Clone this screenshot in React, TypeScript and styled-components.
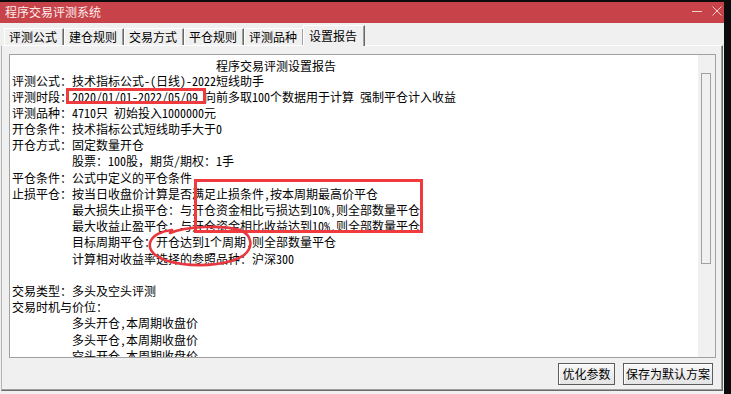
import React from 'react'
import styled, { createGlobalStyle } from 'styled-components'

const GlobalStyle = createGlobalStyle`
  html, body {
    margin: 0;
    padding: 0;
    background: #0c0c0c;
  }
  body {
    font-family: "Noto Sans Mono CJK SC", "Noto Sans CJK SC", sans-serif;
    font-size: 12px;
    color: #000;
  }
`

const Screen = styled.div`
  width: 731px;
  height: 394px;
  padding-top: 2px;
  box-sizing: border-box;
  overflow: hidden;
  background: #0c0c0c;
`

const Window = styled.div`
  width: 724px;
  height: 392px;
  display: flex;
  flex-direction: column;
  background: #f0f0f0;
`

const TitleBar = styled.div`
  height: 21px;
  flex: none;
  display: flex;
  align-items: center;
  padding: 0 2px 0 5px;
  background: #c84349;
  color: #fbecec;
`

const TitleText = styled.span`
  flex: 1;
  line-height: 21px;
  margin-top: -2px;
`

const WinControls = styled.div`
  display: flex;
  align-items: center;
  gap: 10px;
  margin-top: -3px;
`

const TabStrip = styled.div`
  height: 22px;
  flex: none;
  display: flex;
  align-items: flex-end;
  padding-left: 4px;
`

const Tab = styled.div<{ $active?: boolean }>`
  box-sizing: border-box;
  width: ${(p) => (p.$active ? '62px' : '60px')};
  height: ${(p) => (p.$active ? '21px' : '17px')};
  margin-left: ${(p) => (p.$active ? '-1px' : '0')};
  margin-bottom: ${(p) => (p.$active ? '-1px' : '0')};
  display: flex;
  align-items: center;
  justify-content: center;
  padding-right: 2px;
  border-top: 1px solid #ffffff;
  border-left: 1px solid #ffffff;
  border-right: 1px solid #696969;
  box-shadow: inset -1px 0 0 #a0a0a0;
  background: #f0f0f0;
  position: relative;
  z-index: ${(p) => (p.$active ? 1 : 0)};
  line-height: 16px;
`

const Panel = styled.div`
  flex: 1;
  margin: 0 1px 3px 1px;
  padding: 8px 0 0 7px;
  border-top: 1px solid #ffffff;
  border-left: 1px solid #b4b4b4;
  border-right: 1px solid #696969;
  border-bottom: 1px solid #696969;
  box-shadow: inset -1px -1px 0 #a0a0a0;
  display: flex;
  flex-direction: column;
`

const TextBox = styled.div`
  box-sizing: border-box;
  width: 707px;
  height: 304px;
  flex: none;
  display: flex;
  border: 1px solid #a0a0a0;
  background: #ffffff;
`

const Content = styled.div`
  flex: 1;
  position: relative;
  overflow: hidden;
  padding: 2.5px 0 0 2px;
`

const Heading = styled.div`
  height: 15px;
  line-height: 15px;
  padding-left: 204px;
  white-space: pre;
`

const Line = styled.div`
  display: flex;
  height: 16.2px;
  line-height: 16.2px;
  white-space: pre;
`

const Label = styled.span<{ $wide?: boolean }>`
  flex: none;
  width: ${(p) => (p.$wide ? 'auto' : '60px')};
`

const ScrollTrack = styled.div`
  width: 17px;
  flex: none;
  background: #f0f0f0;
  padding: 18px 0 0 3px;
  box-sizing: border-box;
`

const ScrollThumb = styled.div`
  width: 10px;
  height: 191px;
  box-sizing: border-box;
  border: 1px solid #a0a0a0;
  background: #f0f0f0;
`

const Mark = styled.div`
  position: absolute;
  box-sizing: border-box;
  border: 3px solid #ef3b3e;
`

const Loop = styled.svg`
  position: absolute;
  left: 132px;
  top: 170px;
  overflow: visible;
`

const ButtonRow = styled.div`
  width: 704px;
  margin-top: 5px;
  display: flex;
  justify-content: flex-end;
  gap: 8px;
`

const Button = styled.button<{ $w: number }>`
  box-sizing: border-box;
  width: ${(p) => p.$w}px;
  height: 22px;
  padding: 0;
  font: inherit;
  color: #000;
  border: 1px solid #5c5c5c;
  box-shadow: inset 1px 1px 0 #ffffff;
  background: linear-gradient(#f8f8f8, #e4e4e4);
  line-height: 20px;
`

type Row = { label?: string; value: string; wide?: boolean }

const rows: Row[] = [
  { label: '评测公式：', value: '技术指标公式-(日线)-2022短线助手' },
  { label: '评测时段：', value: '2020/01/01-2022/05/09 向前多取100个数据用于计算 强制平仓计入收益' },
  { label: '评测品种：', value: '4710只 初始投入1000000元' },
  { label: '开仓条件：', value: '技术指标公式短线助手大于0' },
  { label: '开仓方式：', value: '固定数量开仓' },
  { value: '股票：100股，期货/期权：1手' },
  { label: '平仓条件：', value: '公式中定义的平仓条件' },
  { label: '止损平仓：', value: '按当日收盘价计算是否满足止损条件,按本周期最高价平仓' },
  { value: '最大损失止损平仓：与开仓资金相比亏损达到10%,则全部数量平仓' },
  { value: '最大收益止盈平仓：与开仓资金相比收益达到10%,则全部数量平仓' },
  { value: '目标周期平仓：开仓达到1个周期,则全部数量平仓' },
  { value: '计算相对收益率选择的参照品种：沪深300' },
  { value: '' },
  { label: '交易类型：', value: '多头及空头评测' },
  { label: '交易时机与价位：', value: '', wide: true },
  { value: '多头开仓,本周期收盘价' },
  { value: '多头平仓,本周期收盘价' },
  { value: '空头开仓,本周期收盘价' },
]

const tabs = ['评测公式', '建仓规则', '交易方式', '平仓规则', '评测品种', '设置报告']

export default function App() {
  return (
    <Screen>
      <GlobalStyle />
      <Window>
        <TitleBar>
          <TitleText>程序交易评测系统</TitleText>
          <WinControls>
            <svg width="10" height="10" viewBox="0 0 10 10">
              <line x1="0" y1="5.5" x2="10" y2="5.5" stroke="#f3cfd0" strokeWidth="1" />
            </svg>
            <svg width="10" height="10" viewBox="0 0 10 10">
              <path d="M0.5 0.5 L9.5 9.5 M9.5 0.5 L0.5 9.5" stroke="#f3cfd0" strokeWidth="1" />
            </svg>
          </WinControls>
        </TitleBar>
        <TabStrip>
          {tabs.map((t, i) => (
            <Tab key={t} $active={i === tabs.length - 1}>
              {t}
            </Tab>
          ))}
        </TabStrip>
        <Panel>
          <TextBox>
            <Content>
              <Heading>程序交易评测设置报告</Heading>
              {rows.map((r, i) => (
                <Line key={i}>
                  <Label $wide={r.wide}>{r.label || ''}</Label>
                  <span>{r.value}</span>
                </Line>
              ))}
              <Mark style={{ left: 56, top: 33, width: 140, height: 16 }} />
              <Mark style={{ left: 184, top: 124, width: 229, height: 54 }} />
              <Loop width="112" height="44" viewBox="0 0 112 44">
                <path
                  d="M28 8 C44 1 80 0 98 5 C110 10 112 22 102 30 C90 39 62 42 40 39 C18 36 6 28 8 18 C10 10 20 6 30 5"
                  fill="none"
                  stroke="#e8383f"
                  strokeWidth="2.6"
                  strokeLinecap="round"
                />
              </Loop>
            </Content>
            <ScrollTrack>
              <ScrollThumb />
            </ScrollTrack>
          </TextBox>
          <ButtonRow>
            <Button $w={57}>优化参数</Button>
            <Button $w={90}>保存为默认方案</Button>
          </ButtonRow>
        </Panel>
      </Window>
    </Screen>
  )
}
